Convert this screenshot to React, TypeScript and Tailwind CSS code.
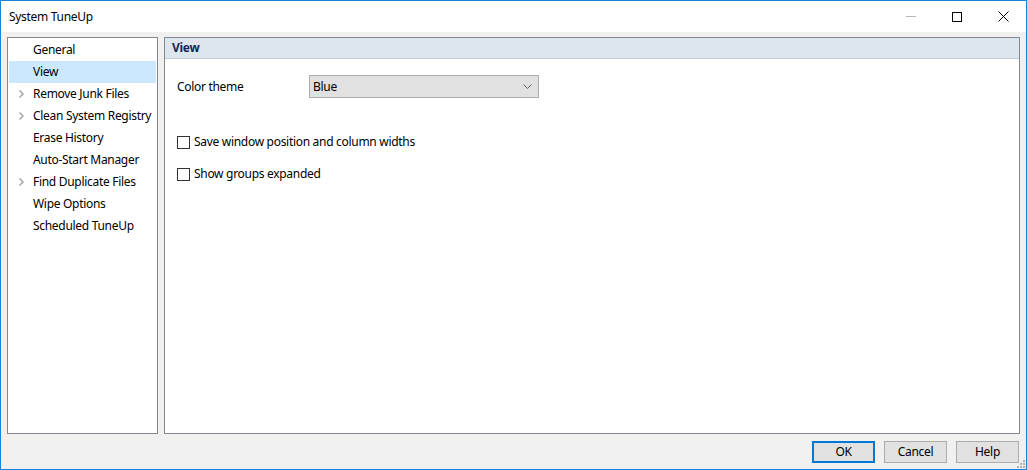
import React from 'react';

const items = [
  { label: 'General', arrow: false },
  { label: 'View', arrow: false, selected: true },
  { label: 'Remove Junk Files', arrow: true },
  { label: 'Clean System Registry', arrow: true },
  { label: 'Erase History', arrow: false },
  { label: 'Auto-Start Manager', arrow: false },
  { label: 'Find Duplicate Files', arrow: true },
  { label: 'Wipe Options', arrow: false },
  { label: 'Scheduled TuneUp', arrow: false },
];

const Chevron = () => (
  <svg width="8" height="10" viewBox="0 0 8 10" className="shrink-0">
    <path d="M1.5 1.5 L5 5 L1.5 8.5" fill="none" stroke="#a0a0a0" strokeWidth="1.4" />
  </svg>
);

const Checkbox = ({ label }: { label: string }) => (
  <div className="flex items-center gap-[4px] h-[16px]">
    <div className="w-[13px] h-[13px] border border-[#333333] bg-white" />
    <span>{label}</span>
  </div>
);

export default function App() {
  return (
    <div
      className="w-[1027px] h-[470px] border border-[#1883d7] bg-[#f0f0f0] flex flex-col text-[12px] tracking-[-0.3px] text-black"
      style={{ fontFamily: '"Noto Sans", "Liberation Sans", sans-serif' }}
    >
      {/* title bar */}
      <div className="h-[31px] bg-white flex items-center shrink-0">
        <span className="pl-[8px] flex-1">System TuneUp</span>
        <div className="flex h-full">
          <div className="w-[46px] flex items-center justify-center">
            <div className="w-[10px] h-px bg-[#b8b8b8]" />
          </div>
          <div className="w-[46px] flex items-center justify-center">
            <div className="w-[10px] h-[10px] border border-black" />
          </div>
          <div className="w-[46px] flex items-center justify-center">
            <svg width="11" height="11" viewBox="0 0 11 11">
              <path d="M0.5 0.5 L10.5 10.5 M10.5 0.5 L0.5 10.5" stroke="#000" strokeWidth="1" />
            </svg>
          </div>
        </div>
      </div>

      {/* main area */}
      <div className="flex gap-[6px] px-[6px] pt-[5px] h-[402px] shrink-0">
        <div className="w-[151px] h-[397px] border border-[#828790] bg-white pt-[1px] px-[1px]">
          {items.map((it) => (
            <div
              key={it.label}
              className={`h-[22px] flex items-center ${it.selected ? 'bg-[#cce8ff]' : ''}`}
            >
              <div className="w-[24px] flex justify-end pr-[7px]">{it.arrow && <Chevron />}</div>
              <span className="whitespace-nowrap">{it.label}</span>
            </div>
          ))}
        </div>

        <div className="flex-1 h-[397px] border border-[#828790] bg-white flex flex-col">
          <div className="h-[21px] bg-[#dde6ed] border-b border-[#c4ccd4] flex items-center pl-[7px]">
            <span className="font-bold text-[#17245a]">View</span>
          </div>
          <div className="pl-[12px] pt-[16px]">
            <div className="flex items-center h-[23px]">
              <span className="w-[132px]">Color theme</span>
              <div className="w-[230px] h-[23px] border border-[#adadad] bg-[#e1e1e1] flex items-center pl-[3px] pr-[6px]">
                <span className="flex-1">Blue</span>
                <svg width="9" height="6" viewBox="0 0 9 6">
                  <path d="M0.5 0.5 L4.5 4.5 L8.5 0.5" fill="none" stroke="#606060" strokeWidth="1" />
                </svg>
              </div>
            </div>
            <div className="mt-[36px] flex flex-col gap-[16px]">
              <Checkbox label="Save window position and column widths" />
              <Checkbox label="Show groups expanded" />
            </div>
          </div>
        </div>
      </div>

      {/* footer */}
      <div className="flex justify-end gap-[9px] pr-[7px] pt-[7px] relative flex-1">
        <button className="w-[63px] h-[22px] border-2 border-[#0078d7] bg-[#e1e1e1]">OK</button>
        <button className="w-[63px] h-[22px] border border-[#adadad] bg-[#e1e1e1]">Cancel</button>
        <button className="w-[63px] h-[22px] border border-[#adadad] bg-[#e1e1e1]">Help</button>
        <svg width="10" height="10" viewBox="0 0 10 10" className="absolute right-0 bottom-0">
          <g fill="#b0b0b0">
            <rect x="7" y="1" width="2" height="2" />
            <rect x="4" y="4" width="2" height="2" />
            <rect x="7" y="4" width="2" height="2" />
            <rect x="1" y="7" width="2" height="2" />
            <rect x="4" y="7" width="2" height="2" />
            <rect x="7" y="7" width="2" height="2" />
          </g>
        </svg>
      </div>
    </div>
  );
}
